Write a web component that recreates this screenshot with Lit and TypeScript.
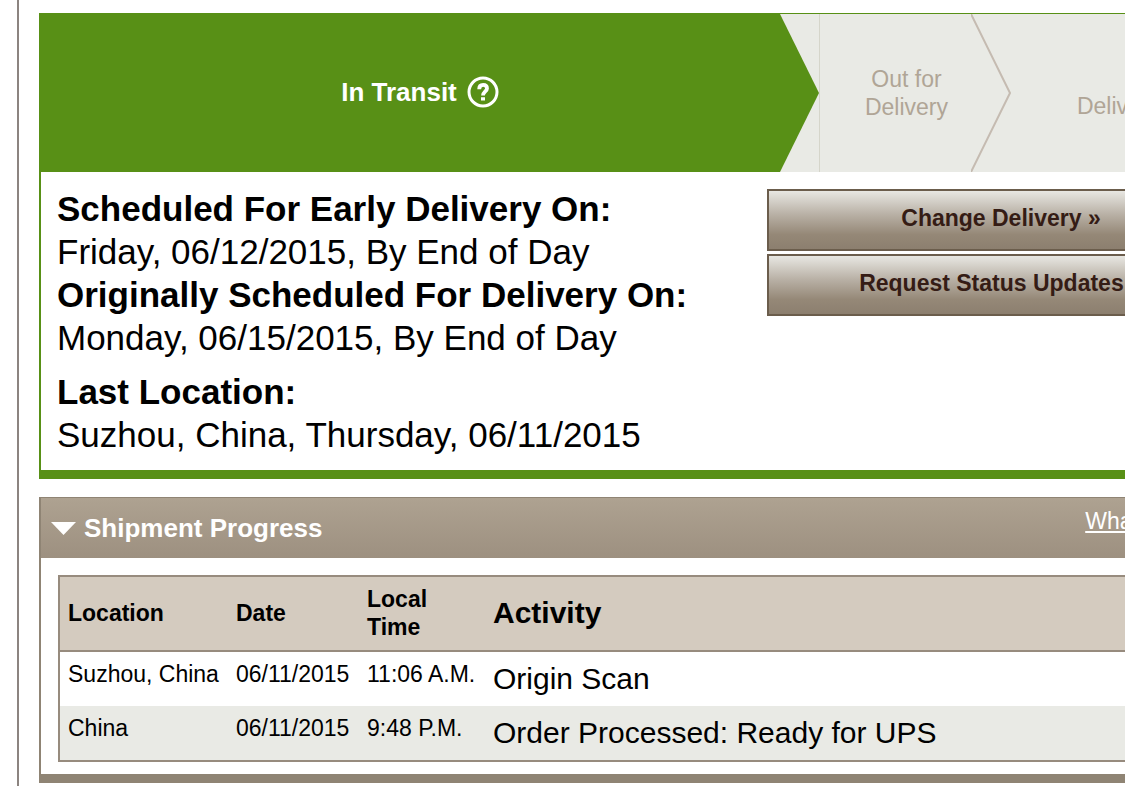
import { LitElement, html, css } from "lit";
import { customElement, state } from "lit/decorators.js";

interface Scan {
  location: string;
  date: string;
  time: string;
  activity: string;
}

const SCANS: Scan[] = [
  { location: "Suzhou, China", date: "06/11/2015", time: "11:06 A.M.", activity: "Origin Scan" },
  { location: "China", date: "06/11/2015", time: "9:48 P.M.", activity: "Order Processed: Ready for UPS" },
];

@customElement("status-steps")
class StatusSteps extends LitElement {
  static styles = css`
    :host {
      display: block;
    }
    .steps {
      display: grid;
      grid-template-columns: 1fr 192px 241px;
      min-height: 158px;
      margin: 0;
      padding: 0;
      list-style: none;
      background: #e9eae5;
      color: #b0a596;
      font-size: 23px;
      line-height: 28px;
      text-align: center;
    }
    .step {
      display: flex;
      align-items: center;
      justify-content: center;
    }
    .current {
      gap: 10px;
      padding: 0 20px 2px 0;
      background: #589016;
      clip-path: polygon(0 0, calc(100% - 39px) 0, 100% 50%, calc(100% - 39px) 100%, 0 100%);
      color: #fff;
      font-size: 26px;
      font-weight: bold;
    }
    .next {
      align-items: stretch;
      border-left: 1px solid #d5d5ca;
    }
    .label {
      flex: 1;
      align-self: center;
      padding-left: 22px;
    }
    .chevron {
      flex: none;
      width: 40px;
      height: 158px;
    }
    .last {
      padding: 26px 12px 0 0;
    }
    .help {
      display: flex;
      padding: 0;
      border: 0;
      background: none;
      color: inherit;
    }
  `;

  render() {
    return html`
      <ol class="steps">
        <li class="step current" aria-current="step">
          <span>In Transit</span>
          <button class="help" type="button" aria-label="Help">
            <svg width="32" height="32" viewBox="0 0 32 32" fill="none" stroke="currentColor">
              <circle cx="16" cy="16" r="14" stroke-width="3" />
              <path d="M12.2 13.2C12.2 10.4 13.8 8.8 16.1 8.8C18.5 8.8 20 10.3 20 12.4C20 15.2 16 15.6 16 19.6" stroke-width="3.8" />
              <path d="M14 21.2H18V24.6H14Z" fill="currentColor" stroke="none" />
            </svg>
          </button>
        </li>
        <li class="step next">
          <span class="label">Out for Delivery</span>
          <svg class="chevron" viewBox="0 0 40 158" fill="none" stroke="#c5bbb1" stroke-width="2" aria-hidden="true">
            <path d="M0 0L39 79L0 158" />
          </svg>
        </li>
        <li class="step last"><span>Delivered</span></li>
      </ol>
    `;
  }
}

@customElement("shipment-progress")
class ShipmentProgress extends LitElement {
  static styles = css`
    :host {
      display: block;
      border: 1px solid #8f8474;
      border-width: 1px 2px 9px;
    }
    .bar {
      display: flex;
      align-items: center;
      justify-content: space-between;
      min-height: 60px;
      padding: 0 35px 0 10px;
      background: linear-gradient(#aea291, #9d9080);
      color: #fff;
    }
    .title {
      margin: 0;
      font-size: 26px;
      line-height: 30px;
    }
    .toggle {
      display: flex;
      align-items: center;
      gap: 8px;
      padding: 0;
      border: 0;
      background: none;
      color: inherit;
      font: inherit;
    }
    .closed .arrow {
      transform: rotate(-90deg);
    }
    .help {
      padding-bottom: 14px;
      color: #fff;
      font-size: 23px;
      line-height: 28px;
    }
    .body {
      padding: 17px 17px 12px;
    }
    .scans {
      width: 100%;
      border: 2px solid #978b7e;
      border-spacing: 0;
      font-size: 23px;
      line-height: 28px;
      text-align: left;
    }
    .scans th {
      padding: 8px 8px 9px;
      border-bottom: 2px solid #978b7e;
      background: #d4cbbf;
    }
    .scans td {
      padding: 8px;
      vertical-align: top;
    }
    .scans tr:nth-child(even) td {
      background: #e9eae5;
    }
    .place {
      width: 152px;
    }
    .date {
      width: 115px;
    }
    .time {
      width: 110px;
    }
    .scans .activity {
      font-size: 30px;
      line-height: 38px;
    }
  `;

  @state() private open = true;

  render() {
    return html`
      <div class="bar">
        <h2 class="title">
          <button
            class="toggle ${this.open ? "" : "closed"}"
            type="button"
            aria-expanded=${this.open ? "true" : "false"}
            @click=${() => (this.open = !this.open)}
          >
            <svg class="arrow" width="25" height="13" viewBox="0 0 25 13" aria-hidden="true">
              <path d="M0 0H25L12.5 13Z" fill="#fff" />
            </svg>
            Shipment Progress
          </button>
        </h2>
        <a class="help" href="#help">What's This?</a>
      </div>
      ${this.open
        ? html`<div class="body">
            <table class="scans">
              <thead>
                <tr>
                  <th class="place" scope="col">Location</th>
                  <th class="date" scope="col">Date</th>
                  <th class="time" scope="col">Local<br />Time</th>
                  <th class="activity" scope="col">Activity</th>
                </tr>
              </thead>
              <tbody>
                ${SCANS.map(
                  (s) => html`<tr>
                    <td>${s.location}</td>
                    <td>${s.date}</td>
                    <td>${s.time}</td>
                    <td class="activity">${s.activity}</td>
                  </tr>`
                )}
              </tbody>
            </table>
          </div>`
        : ""}
    `;
  }
}

@customElement("app-root")
class AppRoot extends LitElement {
  static styles = css`
    :host {
      display: block;
      min-height: 100vh;
      overflow: hidden;
      background: #fff;
      color: #000;
      font-family: "Liberation Sans", Arial, Helvetica, sans-serif;
    }
    /* The sheet is wider than the window and runs off its right side. */
    .sheet {
      box-sizing: border-box;
      display: flex;
      flex-direction: column;
      gap: 18px;
      min-height: 100vh;
      margin: 0 -151px 0 17px;
      padding: 13px 20px 0;
      border: solid #8c8480;
      border-width: 0 2px;
    }
    .status {
      border: 1px solid #589016;
      border-width: 1px 2px 9px;
    }
    .details {
      display: grid;
      grid-template-columns: 1fr 468px;
      padding: 15px 17px 14px 16px;
    }
    .facts {
      margin: 0;
      font-size: 35px;
    }
    .facts dt {
      font-weight: bold;
      line-height: 44px;
    }
    .facts dd {
      margin: 0;
      line-height: 42px;
    }
    .facts .where {
      padding-top: 11px;
    }
    .actions {
      display: flex;
      flex-direction: column;
      align-items: stretch;
      gap: 3px;
      padding-top: 2px;
    }
    .action {
      min-height: 62px;
      padding: 0 16px 4px;
      border: 2px solid #6b5d4c;
      background: linear-gradient(#e8e7e2, #b9b1a6 40%, #958877 75%, #8c7f6f);
      color: #351c15;
      font: bold 23px/28px "Liberation Sans", Arial, sans-serif;
    }
  `;

  render() {
    return html`
      <main class="sheet">
        <section class="status">
          <status-steps></status-steps>
          <div class="details">
            <dl class="facts">
              <dt>Scheduled For Early Delivery On:</dt>
              <dd>Friday, 06/12/2015, By End of Day</dd>
              <dt>Originally Scheduled For Delivery On:</dt>
              <dd>Monday, 06/15/2015, By End of Day</dd>
              <dt class="where">Last Location:</dt>
              <dd>Suzhou, China, Thursday, 06/11/2015</dd>
            </dl>
            <div class="actions">
              <button class="action" type="button">Change Delivery »</button>
              <button class="action" type="button">Request Status Updates »</button>
            </div>
          </div>
        </section>
        <shipment-progress></shipment-progress>
      </main>
    `;
  }
}
